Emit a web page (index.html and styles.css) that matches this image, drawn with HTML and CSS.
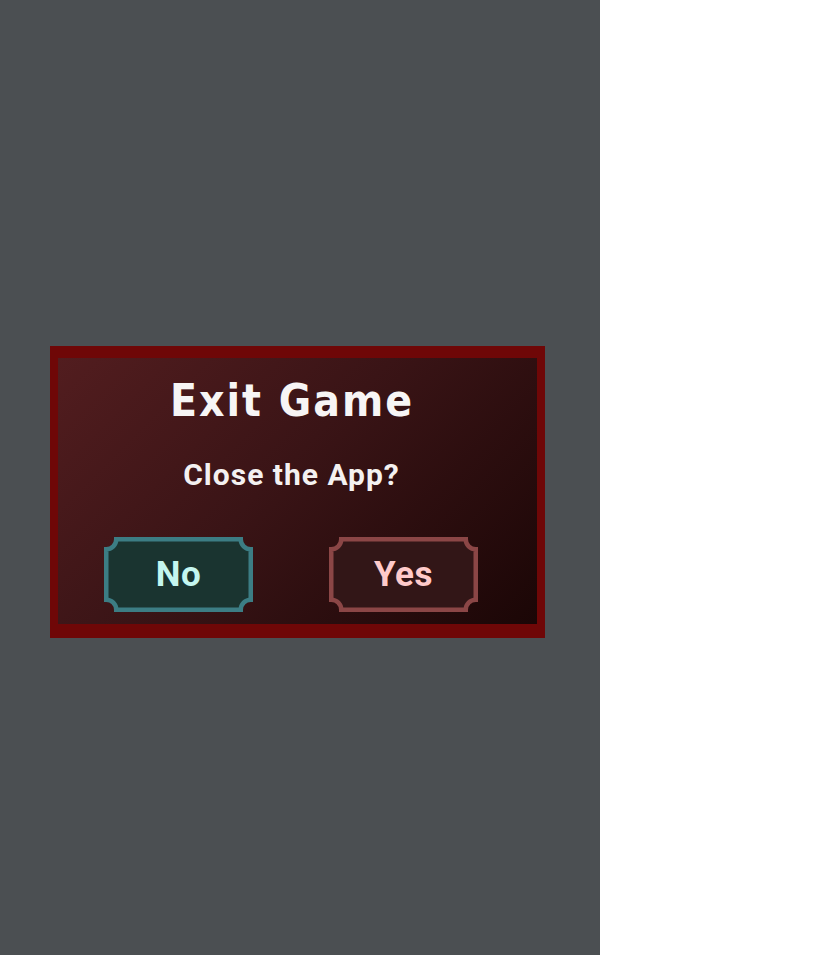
FILE: index.html
```html
<!DOCTYPE html>
<html lang="en">
<head>
<meta charset="utf-8">
<title>Exit Game</title>
<link rel="stylesheet" href="styles.css">
</head>
<body>
<div class="stage">
  <div class="dialog">
    <div class="dialog-inner">
      <h1 class="title">Exit Game</h1>
      <p class="subtitle">Close the App?</p>
      <div class="actions">
        <button class="btn btn-no" type="button">
          <svg class="btn-frame" viewBox="0 0 149 75" width="149" height="75" aria-hidden="true">
            <path d="M12.25 2.25H136.75A10 10 0 0 0 146.75 12.25V62.75A10 10 0 0 0 136.75 72.75H12.25A10 10 0 0 0 2.25 62.75V12.25A10 10 0 0 0 12.25 2.25Z"/>
          </svg>
          <span class="btn-label">No</span>
        </button>
        <button class="btn btn-yes" type="button">
          <svg class="btn-frame" viewBox="0 0 149 75" width="149" height="75" aria-hidden="true">
            <path d="M12.25 2.25H136.75A10 10 0 0 0 146.75 12.25V62.75A10 10 0 0 0 136.75 72.75H12.25A10 10 0 0 0 2.25 62.75V12.25A10 10 0 0 0 12.25 2.25Z"/>
          </svg>
          <span class="btn-label">Yes</span>
        </button>
      </div>
    </div>
  </div>
</div>
</body>
</html>
```
FILE: styles.css
```css
html, body {
  margin: 0;
  padding: 0;
  background: #ffffff;
}

.stage {
  box-sizing: border-box;
  width: 600px;
  height: 955px;
  background: #4b4f52;
  padding: 346px 0 0 50px;
}

.dialog {
  box-sizing: border-box;
  width: 495px;
  height: 292px;
  border-style: solid;
  border-color: #6f0707;
  border-width: 12px 8px 14px 8px;
  background: linear-gradient(135deg, #521d1f 0%, #3a1416 45%, #1b0606 100%);
}

.dialog-inner {
  box-sizing: border-box;
  height: 100%;
  padding: 20px 13px 0 0;
  display: flex;
  flex-direction: column;
  align-items: center;
  font-family: Roboto, "Liberation Sans", sans-serif;
  font-weight: 700;
}

.title {
  margin: 0;
  font-family: "DejaVu Sans", sans-serif;
  font-stretch: condensed;
  font-size: 44px;
  line-height: 45px;
  font-weight: 700;
  letter-spacing: 2px;
  padding-left: 2px;
  color: #f7f5f5;
}

.subtitle {
  margin: 37px 0 0 0;
  font-size: 30px;
  line-height: 30px;
  letter-spacing: 1px;
  padding-left: 1px;
  color: #f4f1f1;
}

.actions {
  margin-top: 47px;
  display: flex;
  gap: 76px;
}

.btn {
  position: relative;
  width: 149px;
  height: 75px;
  padding: 0;
  margin: 0;
  border: 0;
  background: transparent;
  display: flex;
  align-items: center;
  justify-content: center;
  font-family: Roboto, "Liberation Sans", sans-serif;
  font-weight: 700;
  font-size: 35px;
  line-height: 35px;
  letter-spacing: 0.5px;
  cursor: pointer;
}

.btn-frame {
  position: absolute;
  left: 0;
  top: 0;
}

.btn-frame path {
  stroke-width: 4.5;
}

.btn-label {
  position: relative;
}

.btn-no .btn-frame path {
  fill: #1a3430;
  stroke: #3c7d84;
}

.btn-no .btn-label {
  color: #c4f6ef;
}

.btn-yes .btn-frame path {
  fill: #321617;
  stroke: #8b4646;
}

.btn-yes .btn-label {
  color: #ffcaca;
}
```
